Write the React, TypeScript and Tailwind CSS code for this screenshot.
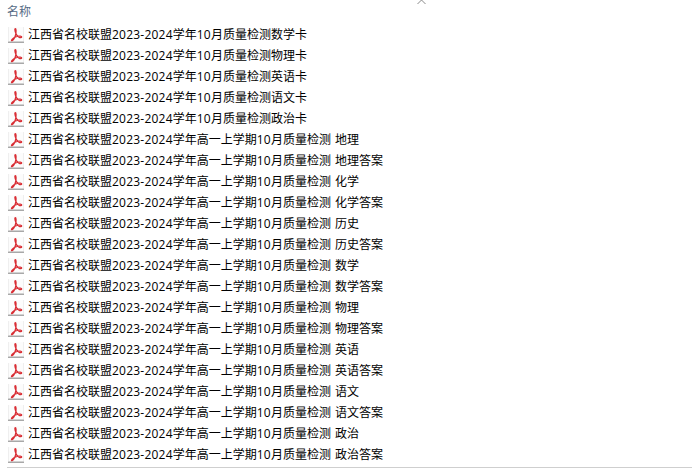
const P = "江西省名校联盟2023-2024学年";
const first = ["数学", "物理", "英语", "语文", "政治"].map((s) => `10月质量检测${s}卡`);
const subjects = ["地理", "化学", "历史", "数学", "物理", "英语", "语文", "政治"];
const second = subjects.flatMap((s) => [`高一上学期10月质量检测 ${s}`, `高一上学期10月质量检测 ${s}答案`]);
const rows = [...first, ...second];

function PdfIcon() {
  return (
    <svg width="16" height="16" viewBox="0 0 16 16" className="shrink-0">
      <rect x="0" y="0" width="16" height="15" fill="#efefef" />
      <rect x="1" y="0" width="14" height="14" fill="#fcfcfc" />
      <rect x="0" y="14" width="16" height="1" fill="#d2d2d2" />
      <rect x="0" y="15" width="16" height="1" fill="#a8a8a8" />
      <path
        d="M7.4 1.5c-.8 0 -.6 2.4 .4 4.8c.8 2 2.2 3.6 3.4 4.1c1.2 .5 2.6 .3 2.5 -.5c-.1 -.8 -2.3 -.9 -4.5 -.4c-2.2 .5 -4.4 1.6 -5.4 3c-.6 .8 -.3 1.4 .3 1.1c1.3 -.7 3.1 -4 3.7 -6.8c.4 -2 .4 -5.3 -.4 -5.3z"
        fill="none"
        stroke="#d92d34"
        strokeWidth="1.25"
      />
    </svg>
  );
}

function Label({ text }: { text: string }) {
  return (
    <span className="[word-spacing:1px]">
      {text.split(/(\d[\d-]*)/).map((part, i) =>
        i % 2 === 1 ? (
          <span key={i} className="tracking-[0.22px]">
            {part}
          </span>
        ) : (
          part
        ),
      )}
    </span>
  );
}

export default function App() {
  return (
    <div className="relative w-[692px] h-[468px] bg-white overflow-hidden font-['Open_Sans','Noto_Sans_CJK_SC',sans-serif]">
      <svg width="9" height="5" viewBox="0 0 9 5" className="absolute left-[417px] top-0">
        <path d="M0.5 4 L4.5 0 L8.5 4" fill="none" stroke="#8a8a8a" strokeWidth="1" />
      </svg>
      <div className="h-6 pl-[7px] pt-1 text-[12px] leading-4 text-[#566b85]">名称</div>
      <ul className="pl-[8px]">
        {rows.map((r) => (
          <li key={r} className="h-[21px] flex items-center gap-1 text-[12px] text-black whitespace-nowrap">
            <PdfIcon />
            <Label text={P + r} />
          </li>
        ))}
      </ul>
      <div className="absolute left-[7px] right-0 bottom-0 h-px bg-[#cfcfcf]" />
    </div>
  );
}
